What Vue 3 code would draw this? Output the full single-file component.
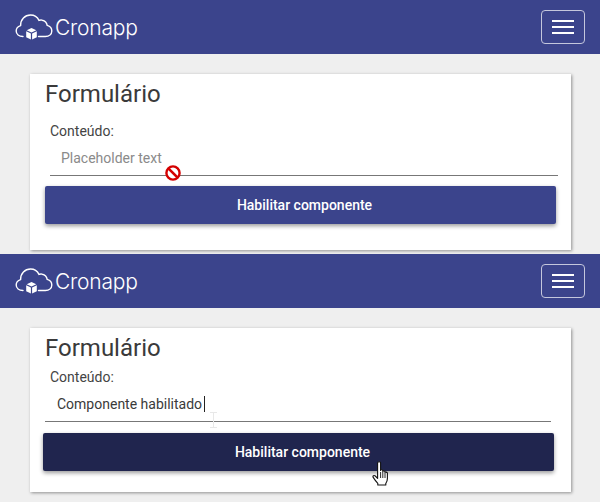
<script setup>
const panels = [
  { id: 1, variant: 'disabled' },
  { id: 2, variant: 'enabled' }
]
</script>

<template>
  <div class="page">
    <section v-for="p in panels" :key="p.id" class="panel" :class="p.variant">
      <header class="nav">
        <div class="brand">
          <svg class="cloud" width="38" height="27" viewBox="0 0 38 27" fill="none">
            <path d="M8 22.5 C4 22.5 1.2 20.2 1.2 17 C1.2 14.4 3 12.4 5.6 11.6 C5.4 5.6 10 1 15.5 1 C19.4 1 22.4 3 24 6.4 C25 6 26.2 5.9 27.2 6.2 C30 6.8 31.8 8.8 32.2 11.4 C35 12.2 36.8 14.4 36.8 17 C36.8 20.4 34 22.5 30.4 22.5 L23.5 22.5" stroke="#fff" stroke-width="1.4" stroke-linecap="round"/>
            <path d="M16.5 14 L21.3 16.2 L16.5 18.4 L11.7 16.2 Z" fill="#fff"/>
            <path d="M11.2 17.2 L15.9 19.4 L15.9 25.4 L11.2 23.2 Z" fill="#fff"/>
            <path d="M21.8 17.2 L17.1 19.4 L17.1 25.4 L21.8 23.2 Z" fill="#fff"/>
          </svg>
          <span class="word">Cronapp</span>
        </div>
        <button class="toggle" type="button" aria-label="Menu">
          <span></span><span></span><span></span>
        </button>
      </header>
      <div class="body">
        <div class="card">
          <h2>Formulário</h2>
          <div class="field">
            <label>Conteúdo:</label>
            <div class="input">
              <span v-if="p.variant === 'disabled'" class="placeholder">Placeholder text</span>
              <span v-else class="value">Componente habilitado<i class="caret"></i></span>
              <svg v-if="p.variant === 'disabled'" class="no" width="16" height="16" viewBox="0 0 16 16" fill="none">
                <circle cx="8" cy="8" r="6.6" fill="#fff" stroke="#d40000" stroke-width="2.4"/>
                <path d="M3.6 3.6 L12.4 12.4" stroke="#d40000" stroke-width="2.6"/>
              </svg>
              <svg v-else class="ibeam" width="7" height="16" viewBox="0 0 7 16" fill="none">
                <path d="M0 .5 H7 M3.5 .5 V15.5 M0 15.5 H7" stroke="#e8e8e8"/>
              </svg>
            </div>
          </div>
          <button class="action" type="button">
            Habilitar componente
            <svg v-if="p.variant === 'enabled'" class="hand" width="18" height="25" viewBox="0 0 18 25">
              <path d="M5.6 2 C5.6 .4 8.6 .4 8.6 2 L8.6 9.5 C8.6 8.4 10.8 8.4 10.8 9.6 L10.8 10.6 C10.8 9.6 13 9.6 13 10.8 L13 11.6 C13 10.8 15.4 10.9 15.4 12.2 L15.4 17.5 C15.4 20 14.6 21 13.8 22.3 L13.8 24 L5.8 24 L5.8 22.4 C4.5 21 2.4 18.3 1.2 16.4 C.4 15.2 2 13.8 3.3 15 L5.6 17.4 Z" fill="#fff" stroke="#111" stroke-width="1.1" stroke-linejoin="round"/>
              <path d="M8.6 11 V17 M10.8 11 V17 M13 12 V17" stroke="#111" stroke-width=".9"/>
            </svg>
          </button>
        </div>
      </div>
    </section>
  </div>
</template>

<style>
html, body { margin: 0; background: #efefef; }
</style>

<style scoped>
.page { width: 600px; height: 502px; overflow: hidden; font-family: Roboto, "Liberation Sans", sans-serif; color: #3a3a3a; }
.nav { height: 54px; background: #3b448c; display: flex; align-items: center; justify-content: space-between; padding: 0 15px; box-sizing: border-box; }
.brand { display: flex; align-items: center; gap: 2px; margin-top: 1px; }
.cloud { display: block; margin-top: -1px; }
.word { font-family: Inter, sans-serif; font-weight: 300; font-size: 21px; color: #fff; letter-spacing: -.2px; }
.toggle { width: 44px; height: 34px; padding: 0; background: transparent; border: 1px solid #c4c7dd; border-radius: 4px; display: flex; flex-direction: column; align-items: center; justify-content: center; gap: 4px; }
.toggle span { display: block; width: 22px; height: 2px; background: #fff; }
.body { background: #efefef; height: 200px; padding: 20px 29px 0 30px; box-sizing: border-box; }
.card { background: #fff; height: 176px; box-sizing: border-box; padding: 6px 15px 0; box-shadow: 1px 1px 3px rgba(0,0,0,.4); }
h2 { margin: 0; font-size: 24px; font-weight: 400; line-height: 28px; color: #3a3a3a; }
.field { padding: 15px 0 0 5px; margin-right: -2px; font-size: 14px; }
label { display: block; line-height: 17px; color: #444; }
.input { position: relative; height: 30px; margin-top: 5px; border-bottom: 1px solid #777; }
.placeholder { display: block; padding: 4px 0 0 11px; line-height: 18px; color: #8a8a8a; }
.no { position: absolute; left: 115px; top: 20px; }
.action { position: relative; display: block; width: 100%; height: 38px; margin-top: 10px; padding: 0 0 0 8px; border: 0; border-radius: 2px; background: #3b448c; color: #fff; font: 500 14px Roboto, sans-serif; box-shadow: 0 2px 4px rgba(0,0,0,.4); }
.enabled .card { height: 164px; }
.enabled .field { padding: 7px 5px 0 5px; margin-right: 0; }
.enabled .input { margin: 4px 0 0 -5px; height: 31px; padding-left: 12px; }
.enabled .value { display: block; padding-top: 5px; line-height: 19px; color: #3a3a3a; }
.caret { display: inline-block; width: 1px; height: 16px; margin-left: 2px; background: #222; vertical-align: -3px; }
.ibeam { position: absolute; left: 165px; top: 22px; }
.enabled .action { width: 511px; margin-left: -2px; margin-top: 11px; background: #20254e; }
.hand { position: absolute; left: 329px; top: 28px; }
</style>
